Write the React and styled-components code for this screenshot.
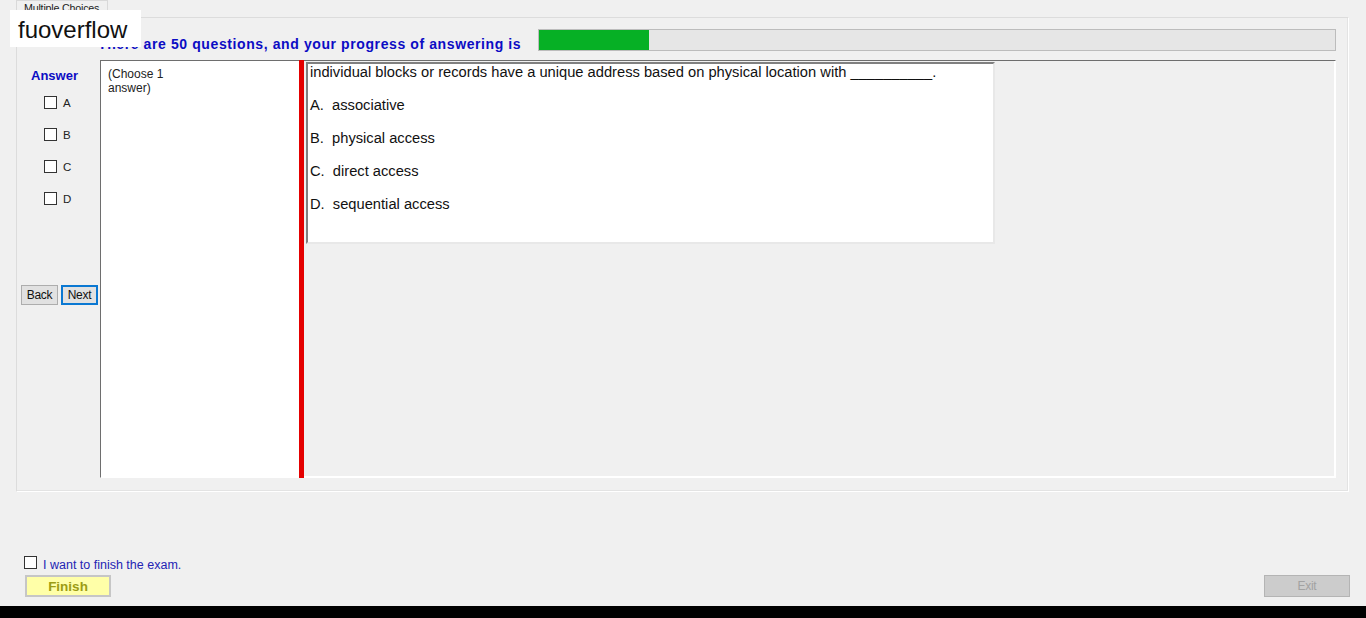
import React from 'react'
import styled, { createGlobalStyle } from 'styled-components'

const Global = createGlobalStyle`
  html, body { margin: 0; padding: 0; }
  body { font-family: "Liberation Sans", Arial, sans-serif; background: #f0f0f0; }
`

const Screen = styled.div`
  position: relative;
  width: 1366px;
  height: 618px;
  background: #f0f0f0;
  display: flex;
  flex-direction: column;
  overflow: hidden;
`

const Watermark = styled.div`
  position: absolute;
  left: 10px;
  top: 10px;
  width: 131px;
  height: 37px;
  background: #fff;
  display: flex;
  align-items: center;
  padding: 3px 0 0 8px;
  box-sizing: border-box;
  font-size: 24px;
  color: #111;
`

const TabStrip = styled.div`
  height: 17px;
  display: flex;
  padding-left: 16px;
`

const Tab = styled.div`
  width: 92px;
  box-sizing: border-box;
  border: 1px solid #d9d9d9;
  border-bottom: none;
  font-size: 10.7px;
  color: #222;
  padding: 1px 0 0 7px;
  white-space: nowrap;
  letter-spacing: -0.2px;
`

const TabPage = styled.div`
  margin-left: 16px;
  width: 1333px;
  height: 475px;
  box-sizing: border-box;
  border: 1px solid #dcdcdc;
  border-right-color: #fff;
  border-bottom-color: #fff;
  box-shadow: inset -1px -1px 0 #e3e3e3;
  display: flex;
  flex-direction: column;
  padding-top: 11px;
`

const HeaderRow = styled.div`
  height: 22px;
  display: flex;
  align-items: center;
  padding-left: 81px;
  margin-bottom: 9px;
`

const HeaderText = styled.div`
  flex: 1;
  font-size: 14px;
  font-weight: bold;
  letter-spacing: 0.6px;
  color: #0c0cc4;
  padding-top: 8px;
  white-space: nowrap;
`

const Progress = styled.div`
  width: 798px;
  height: 22px;
  box-sizing: border-box;
  border: 1px solid #bcbcbc;
  background: #e6e6e6;
  margin-right: 12px;
`

const ProgressFill = styled.div`
  height: 100%;
  background: #06b025;
`

const Body = styled.div`
  display: flex;
  height: 418px;
`

const AnswerCol = styled.div`
  width: 83px;
  display: flex;
  flex-direction: column;
`

const AnswerTitle = styled.div`
  font-size: 13px;
  font-weight: bold;
  color: #0c0cc4;
  margin: 8px 0 0 14px;
`

const ChoiceRow = styled.label`
  display: flex;
  align-items: center;
  height: 13px;
  margin: ${p => (p.$first ? '13px' : '19px')} 0 0 27px;
  font-size: 11.5px;
  color: #222;
`

const Box = styled.span`
  width: 13px;
  height: 13px;
  box-sizing: border-box;
  border: 1px solid #333;
  background: #fff;
  margin-right: 6px;
  flex-shrink: 0;
`

const NavRow = styled.div`
  display: flex;
  gap: 3px;
  margin: 80px 0 0 4px;
`

const NavButton = styled.button`
  width: 37px;
  height: 20px;
  padding: 0;
  box-sizing: border-box;
  font-family: "Liberation Sans", Arial, sans-serif;
  font-size: 12px;
  color: #111;
  background: #e1e1e1;
  border: ${p => (p.$active ? '2px solid #0a78d2' : '1px solid #adadad')};
  letter-spacing: -0.3px;
`

const Panel = styled.div`
  width: 1236px;
  display: flex;
  box-sizing: border-box;
  border-top: 1px solid #6e6e6e;
  border-left: 1px solid #6e6e6e;
  border-right: 1px solid #fff;
  border-bottom: 1px solid #fff;
`

const ListBox = styled.div`
  width: 198px;
  background: #fff;
  font-size: 12px;
  color: #222;
  padding: 6px 0 0 7px;
  box-sizing: border-box;
  line-height: 14px;
`

const Splitter = styled.div`
  width: 5px;
  background: #e40000;
  margin-top: -1px;
  margin-bottom: -1px;
`

const RightArea = styled.div`
  flex: 1;
  padding: 1px 0 0 2px;
  background: #f0f0f0;
  box-shadow: inset -1px -1px 0 #fff;
`

const QuestionBox = styled.div`
  width: 689px;
  height: 182px;
  box-sizing: border-box;
  background: #fff;
  border-top: 2px solid #808080;
  border-left: 2px solid #808080;
  border-right: 2px solid #e8e8e8;
  border-bottom: 2px solid #e8e8e8;
  padding: 0 0 0 2px;
  font-size: 14.7px;
  color: #111;
`

const QLine = styled.div`
  height: 33px;
  line-height: 17px;
  white-space: pre;
`

const Footer = styled.div`
  flex: 1;
  display: flex;
  align-items: flex-end;
  justify-content: space-between;
  padding: 0 16px 9px 24px;
`

const FinishCol = styled.div`
  display: flex;
  flex-direction: column;
`

const FinishCheck = styled.label`
  display: flex;
  align-items: center;
  font-size: 12.5px;
  color: #2424b4;
  margin-bottom: 6px;
  height: 13px;
`

const FinishLabel = styled.span`
  padding-top: 4px;
`

const FinishButton = styled.button`
  width: 86px;
  height: 22px;
  margin-left: 1px;
  box-sizing: border-box;
  background: #ffffa8;
  border: 2px solid #c6c6c6;
  font-family: "Liberation Sans", Arial, sans-serif;
  font-weight: bold;
  font-size: 13.5px;
  color: #9c9c14;
  padding: 0;
`

const ExitButton = styled.button`
  width: 86px;
  height: 22px;
  box-sizing: border-box;
  background: #cccccc;
  border: 1px solid #b4b4b4;
  font-family: "Liberation Sans", Arial, sans-serif;
  font-size: 12px;
  color: #a2a2a2;
  padding: 0;
  letter-spacing: -0.3px;
`

const BlackBar = styled.div`
  height: 12px;
  background: #000;
`

const question = 'individual blocks or records have a unique address based on physical location with __________.'
const options = [
  ['A', 'associative'],
  ['B', 'physical access'],
  ['C', 'direct access'],
  ['D', 'sequential access'],
]

export default function App() {
  const answered = 7
  const total = 50
  return (
    <Screen>
      <Global />
      <TabStrip>
        <Tab>Multiple Choices</Tab>
      </TabStrip>
      <TabPage>
        <HeaderRow>
          <HeaderText>There are {total} questions, and your progress of answering is</HeaderText>
          <Progress>
            <ProgressFill style={{ width: `${(answered / total) * 100 - 0.2}%` }} />
          </Progress>
        </HeaderRow>
        <Body>
          <AnswerCol>
            <AnswerTitle>Answer</AnswerTitle>
            {options.map(([letter], i) => (
              <ChoiceRow key={letter} $first={i === 0}>
                <Box />
                {letter}
              </ChoiceRow>
            ))}
            <NavRow>
              <NavButton>Back</NavButton>
              <NavButton $active>Next</NavButton>
            </NavRow>
          </AnswerCol>
          <Panel>
            <ListBox>
              (Choose 1<br />answer)
            </ListBox>
            <Splitter />
            <RightArea>
              <QuestionBox>
                <QLine>{question}</QLine>
                {options.map(([letter, text]) => (
                  <QLine key={letter}>{`${letter}.  ${text}`}</QLine>
                ))}
              </QuestionBox>
            </RightArea>
          </Panel>
        </Body>
      </TabPage>
      <Footer>
        <FinishCol>
          <FinishCheck>
            <Box />
            <FinishLabel>I want to finish the exam.</FinishLabel>
          </FinishCheck>
          <FinishButton>Finish</FinishButton>
        </FinishCol>
        <ExitButton>Exit</ExitButton>
      </Footer>
      <BlackBar />
      <Watermark>fuoverflow</Watermark>
    </Screen>
  )
}
